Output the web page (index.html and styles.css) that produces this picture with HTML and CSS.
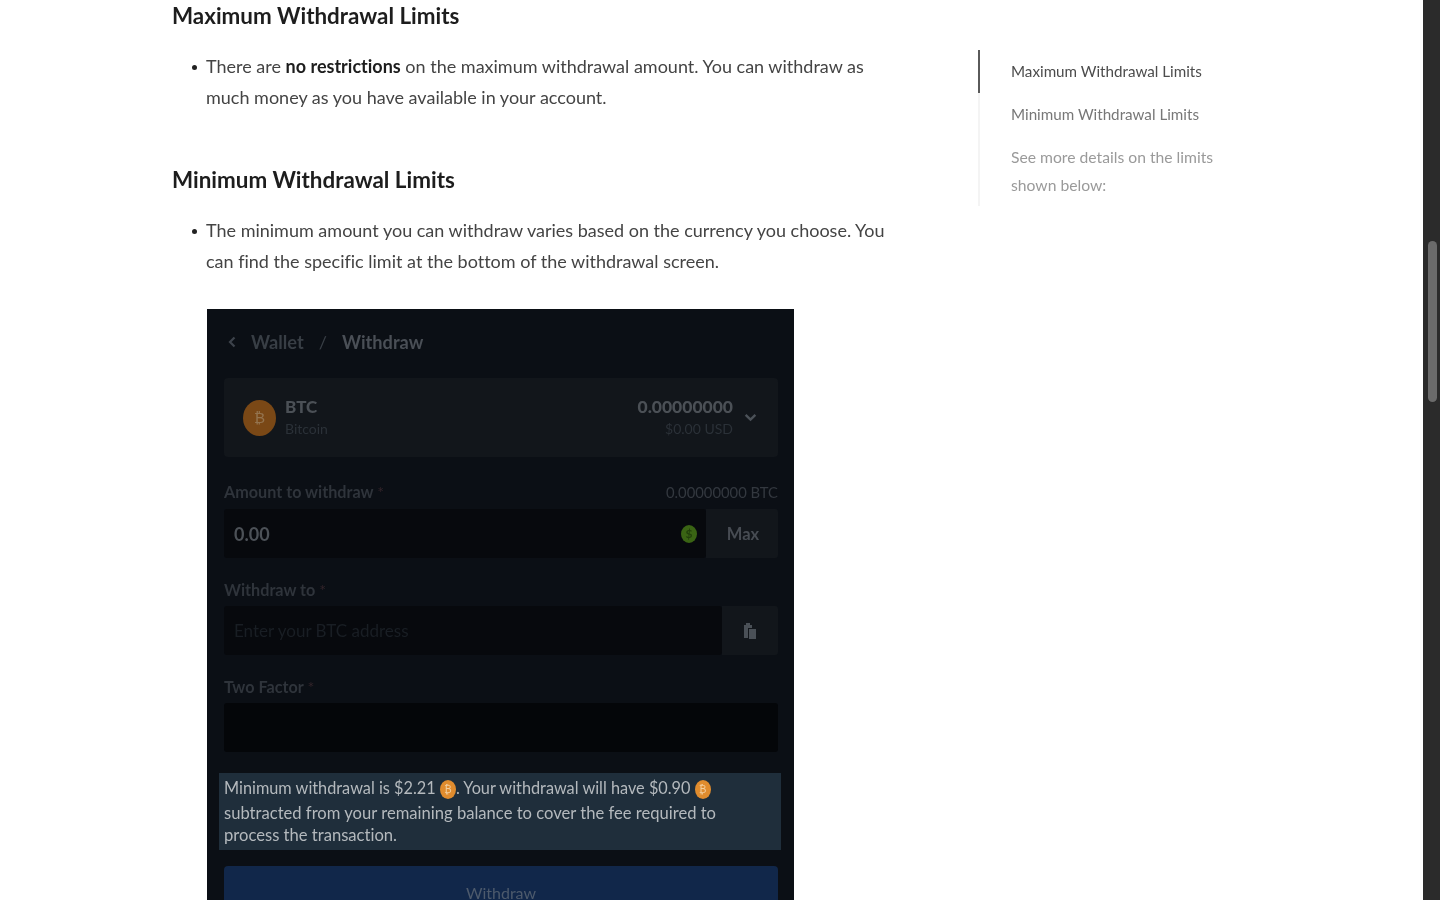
FILE: index.html
```html
<!DOCTYPE html>
<html lang="en">
<head>
<meta charset="utf-8">
<title>Withdrawal Limits</title>
<link rel="stylesheet" href="styles.css">
</head>
<body>
<div class="page">
  <main class="article">
    <h2>Maximum Withdrawal Limits</h2>
    <ul>
      <li>There are <strong>no restrictions</strong> on the maximum withdrawal amount. You can withdraw as much money as you have available in your account.</li>
    </ul>
    <h2>Minimum Withdrawal Limits</h2>
    <ul class="last">
      <li>The minimum amount you can withdraw varies based on the currency you choose. You can find the specific limit at the bottom of the withdrawal screen.</li>
    </ul>
    <div class="shot">
      <div class="crumbs">
        <svg class="back" viewBox="0 0 10 14" width="10" height="14"><path d="M7.500 2.500 3 7l4.500 4.500" fill="none" stroke="#3d434b" stroke-width="2.200"/></svg>
        <span>Wallet</span><span class="slash">/</span><span class="cur">Withdraw</span>
      </div>
      <div class="coin-row">
        <div class="coin"><span>₿</span></div>
        <div class="coin-name"><b>BTC</b><small>Bitcoin</small></div>
        <div class="coin-bal"><b>0.00000000</b><small>$0.00 USD</small></div>
        <svg class="chev" viewBox="0 0 12 8" width="13" height="9"><path d="M1.500 1.500 6 6l4.500-4.500" fill="none" stroke="#4b5158" stroke-width="2.200"/></svg>
      </div>
      <div class="label-row amount-label"><span>Amount to withdraw <i>*</i></span><span class="avail">0.00000000 BTC</span></div>
      <div class="field-row amount-field">
        <div class="input value"><span>0.00</span><span class="usd">$</span></div>
        <div class="side max">Max</div>
      </div>
      <div class="label-row"><span>Withdraw to <i>*</i></span></div>
      <div class="field-row">
        <div class="input ph"><span>Enter your BTC address</span></div>
        <div class="side paste">
          <svg viewBox="0 0 16 20" width="16" height="20"><path d="M2 4h2V2h4v2h2v3H6v10H2z M7 8h7v10H7z" fill="#4a5057"/></svg>
        </div>
      </div>
      <div class="label-row"><span>Two Factor <i>*</i></span></div>
      <div class="input blank"></div>
      <div class="notice"><div class="notice-first">Minimum withdrawal is $2.21 <span class="mini">₿</span>. Your withdrawal will have $0.90 <span class="mini">₿</span></div>subtracted from your remaining balance to cover the fee required to<br>process the transaction.</div>
      <div class="submit">Withdraw</div>
    </div>
  </main>
  <aside class="toc">
    <a class="active">Maximum Withdrawal Limits</a>
    <a class="second">Minimum Withdrawal Limits</a>
    <a class="third">See more details on the limits shown below:</a>
  </aside>
  <div class="scrollbar"><div class="thumb"></div></div>
</div>
</body>
</html>
```

FILE: styles.css
```css
* { box-sizing: border-box; }
html, body { margin: 0; height: 100%; overflow: hidden; background: #fff; }
body { font-family: "Lato", "Liberation Sans", sans-serif; color: #3f3f3f; font-variant-ligatures: none; }
.page { display: flex; height: 900px; overflow: hidden; filter: blur(0.5px); }

.article { width: 806px; margin-left: 172px; flex: none; }
h2 { font-size: 22.400px; line-height: 32px; font-weight: 700; color: #1d1d1d; margin: 0; }
ul { margin: 19px 0 51px; padding: 0 0 0 34px; width: 725px; list-style: none; }
ul.last { margin-bottom: 32px; }
li { position: relative; font-size: 18px; line-height: 31px; color: #444; }
li::before { content: ""; position: absolute; left: -14px; top: 14px; width: 5px; height: 5px; border-radius: 50%; background: #222; }
strong { font-weight: 700; color: #1d1d1d; }

.shot { width: 587px; height: 640px; margin-left: 35px; background: #0b0f15; padding: 1px 16px 0 17px; font-size: 16.200px; color: #2f343b; font-weight: 700; overflow: hidden; }
.crumbs { display: flex; align-items: center; height: 34px; margin-top: 15px; font-size: 18.200px; color: #383e45; }
.back { margin: 0 14px 0 3px; }
.slash { margin: 0 15px; font-weight: 400; }
.cur { color: #4a4f56; }
.coin-row { display: flex; align-items: center; height: 79px; margin-top: 19px; background: #12161b; border-radius: 4px; padding: 0 21px 0 19px; }
.coin { width: 33px; height: 36px; border-radius: 50%; background: #7a4816; display: flex; align-items: center; justify-content: center; color: #94744f; font-size: 15px; font-weight: 400; font-family: "DejaVu Sans", sans-serif; }
.coin-name { display: flex; flex-direction: column; margin-left: 9px; }
.coin-name b, .coin-bal b { font-size: 17px; line-height: 23px; color: #4b5056; }
.coin-bal b { font-size: 17.500px; }
.coin-name small, .coin-bal small { font-size: 14px; line-height: 22px; font-weight: 400; color: #2b3138; }
.coin-bal { display: flex; flex-direction: column; align-items: flex-end; margin-left: auto; }
.chev { margin-left: 11px; }

.label-row { display: flex; justify-content: space-between; align-items: center; line-height: 24px; margin-top: 20px; }
.amount-label { margin-top: 23px; }
.label-row i { color: #33242a; font-style: normal; font-weight: 400; }
.avail { font-size: 14.800px; font-weight: 400; color: #33383f; }
.field-row { display: flex; margin-top: 4px; height: 49px; }
.amount-field { margin-top: 5px; }
.input { flex: 1; background: #07090d; border-radius: 3px; display: flex; align-items: center; justify-content: space-between; padding: 0 10px; }
.value { font-size: 18px; color: #4c5157; }
.usd { width: 16px; height: 18px; border-radius: 50%; background: #3a6414; color: #22400c; font-size: 12px; display: flex; align-items: center; justify-content: center; margin-right: -1px; }
.ph { font-size: 17px; font-weight: 400; color: #191e24; }
.side { background: #12161b; display: flex; align-items: center; justify-content: center; border-radius: 0 3px 3px 0; }
.max { width: 72px; color: #474c53; font-size: 16.500px; padding-left: 2px; }
.paste { width: 56px; }
.blank { flex: none; height: 49px; margin-top: 4px; background: #040609; }
.notice { margin: 21px -3px 0 -5px; height: 77px; padding: 4px 5px 0; background: #1f2e3b; color: #b4b9bd; font-size: 16.600px; font-weight: 400; line-height: 21.500px; white-space: nowrap; }
.notice-first { font-size: 16.300px; margin-bottom: 4px; }
.mini { display: inline-flex; width: 16px; height: 19px; border-radius: 50%; background: #e08c2e; color: #f3cf9f; font-size: 10px; align-items: center; justify-content: center; vertical-align: 1px; font-family: "DejaVu Sans", sans-serif; }
.submit { height: 54px; margin-top: 16px; background: #11274a; border-radius: 4px 4px 0 0; color: #4d5a6c; font-size: 16px; font-weight: 400; display: flex; justify-content: center; padding-top: 17px; }

.toc { width: 300px; flex: none; align-self: flex-start; margin-top: 50px; padding-left: 31px; border-left: 2px solid #f4f4f4; height: 156px; position: relative; font-size: 15.200px; line-height: 28px; }
.toc::before { content: ""; position: absolute; left: -2px; top: 0; width: 2px; height: 43px; background: #5a5a5a; }
.toc a { display: block; margin-top: 7px; padding-bottom: 8px; color: #9a9a9a; }
.toc .active { color: #4c4c4c; }
.toc .second { color: #777; }
.toc .third { color: #9a9a9a; width: 225px; font-size: 15.700px; }
.scrollbar { flex: none; margin-left: auto; width: 17px; height: 900px; background: #2b2b2b; padding: 241px 3px 0 5px; }
.thumb { height: 161px; border-radius: 5px; background: #6b6b6b; }
```
